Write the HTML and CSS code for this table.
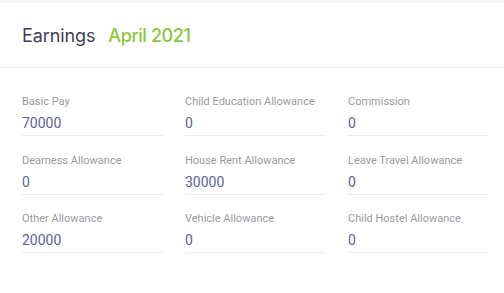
FILE: index.html
```html
<!DOCTYPE html>
<html>
<head>
    <title>Earnings</title>
    <link rel="stylesheet" href="styles.css">
</head>
<body>
    <div class="earnings-card">
        <header class="card-header">
            <h2>Earnings</h2>
            <span class="period">April 2021</span>
        </header>

        <div class="card-body">
            <div class="pay-item">
                <div class="pay-label">Basic Pay</div>
                <div class="pay-value">70000</div>
            </div>
            <div class="pay-item">
                <div class="pay-label">Child Education Allowance</div>
                <div class="pay-value">0</div>
            </div>
            <div class="pay-item">
                <div class="pay-label">Commission</div>
                <div class="pay-value">0</div>
            </div>
            <div class="pay-item">
                <div class="pay-label">Dearness Allowance</div>
                <div class="pay-value">0</div>
            </div>
            <div class="pay-item">
                <div class="pay-label">House Rent Allowance</div>
                <div class="pay-value">30000</div>
            </div>
            <div class="pay-item">
                <div class="pay-label">Leave Travel Allowance</div>
                <div class="pay-value">0</div>
            </div>
            <div class="pay-item">
                <div class="pay-label">Other Allowance</div>
                <div class="pay-value">20000</div>
            </div>
            <div class="pay-item">
                <div class="pay-label">Vehicle Allowance</div>
                <div class="pay-value">0</div>
            </div>
            <div class="pay-item">
                <div class="pay-label">Child Hostel Allowance</div>
                <div class="pay-value">0</div>
            </div>
        </div>
    </div>
</body>
</html>
```

FILE: styles.css
```css
body {
    margin: 0;
    padding: 0;
    background-color: #f6f6f7;
    font-family: 'Roboto', sans-serif;
}

.earnings-card {
    margin-top: 3px;
    background-color: #fff;
    min-height: 290px;
}

.card-header {
    display: flex;
    align-items: center;
    gap: 13px;
    height: 65px;
    padding: 1px 22px 0;
    border-bottom: 1px solid #e9e9ec;
    box-sizing: border-box;
    font-family: 'Inter', sans-serif;
    font-size: 18px;
}

.card-header h2 {
    margin: 0;
    font-size: 18px;
    font-weight: 400;
    color: #3e3e55;
    letter-spacing: -0.1px;
}

.card-header .period {
    font-weight: 500;
    color: #8cc63e;
    letter-spacing: -0.4px;
}

.card-body {
    display: grid;
    grid-template-columns: repeat(3, 141px);
    column-gap: 22px;
    row-gap: 16.5px;
    padding: 26px 22px 0;
}

.pay-item {
    border-bottom: 1px solid #ebebf3;
    padding-bottom: 2px;
}

.pay-label {
    font-size: 11px;
    line-height: 16px;
    color: #9a9a9e;
    white-space: nowrap;
}

.pay-value {
    margin-top: 3px;
    font-size: 14px;
    line-height: 20px;
    color: #5d6199;
}
```
